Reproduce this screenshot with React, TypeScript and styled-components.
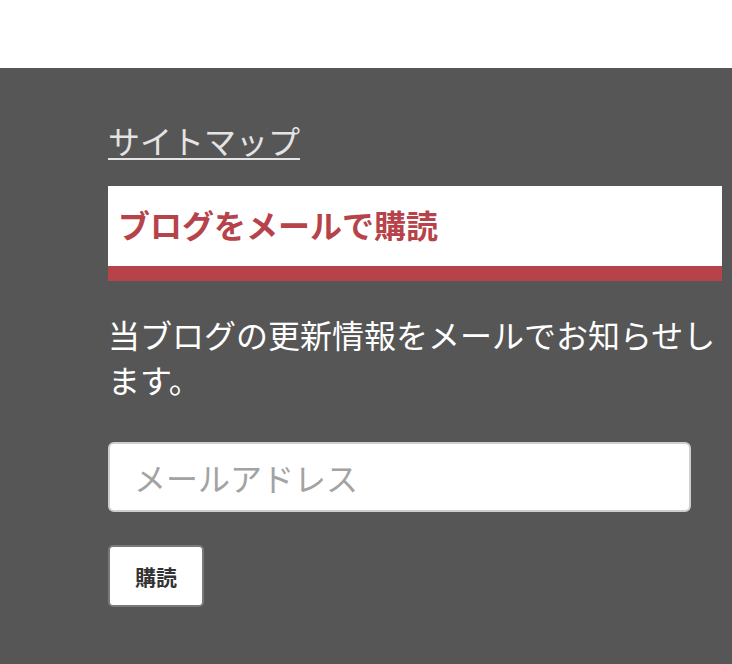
import React from "react";
import styled, { createGlobalStyle } from "styled-components";

const GlobalStyle = createGlobalStyle`
   html, body {
      margin: 0;
      padding: 0;
      background: #ffffff;
   }

   body {
      font-family: "Noto Sans CJK JP", "Noto Sans", sans-serif;
   }
`;

const TopSpace = styled.div`
   height: 68px;
   background: #ffffff;
`;

const Footer = styled.footer`
   background: #565656;
   min-height: 596px;
   padding: 50px 10px 40px 108px;
   box-sizing: border-box;
`;

const Widget = styled.div`
   width: 614px;
   display: flex;
   flex-direction: column;
   align-items: flex-start;
`;

const SitemapLink = styled.a`
   font-size: 32px;
   line-height: 45px;
   color: #e4e4e4;
   text-decoration: underline;
   text-underline-offset: 4px;
   text-decoration-thickness: 2px;
`;

const WidgetTitle = styled.h3`
   align-self: stretch;
   margin: 23px 0 0;
   height: 75px;
   display: flex;
   align-items: center;
   padding: 0 10px 5px;
   background: #ffffff;
   border-bottom: 15px solid #b7434a;
   color: #b7434a;
   font-size: 32px;
   font-weight: 700;
`;

const Description = styled.p`
   margin: 31px 0 0;
   font-size: 32px;
   line-height: 45px;
   color: #ffffff;
`;

const EmailInput = styled.input`
   margin-top: 40px;
   width: 583px;
   height: 70px;
   box-sizing: border-box;
   padding: 0 24px;
   border: 2px solid #cfcfcf;
   border-radius: 6px;
   background: #ffffff;
   font-family: inherit;
   font-size: 32px;
   color: #333333;

   &::placeholder {
      color: #a3a3a3;
   }
`;

const SubscribeButton = styled.button`
   margin-top: 33px;
   width: 96px;
   height: 62px;
   border: 2px solid #7a7a7a;
   border-radius: 5px;
   background: #ffffff;
   font-family: inherit;
   font-size: 21px;
   font-weight: 700;
   color: #333333;
   cursor: pointer;
`;

const App: React.FC = () => {
   return (
      <>
         <GlobalStyle />
         <TopSpace />
         <Footer>
            <Widget>
               <SitemapLink href="#">サイトマップ</SitemapLink>
               <WidgetTitle>ブログをメールで購読</WidgetTitle>
               <Description>
                  当ブログの更新情報をメールでお知らせします。
               </Description>
               <EmailInput type="email" placeholder="メールアドレス" />
               <SubscribeButton type="button">購読</SubscribeButton>
            </Widget>
         </Footer>
      </>
   );
};

export default App;
